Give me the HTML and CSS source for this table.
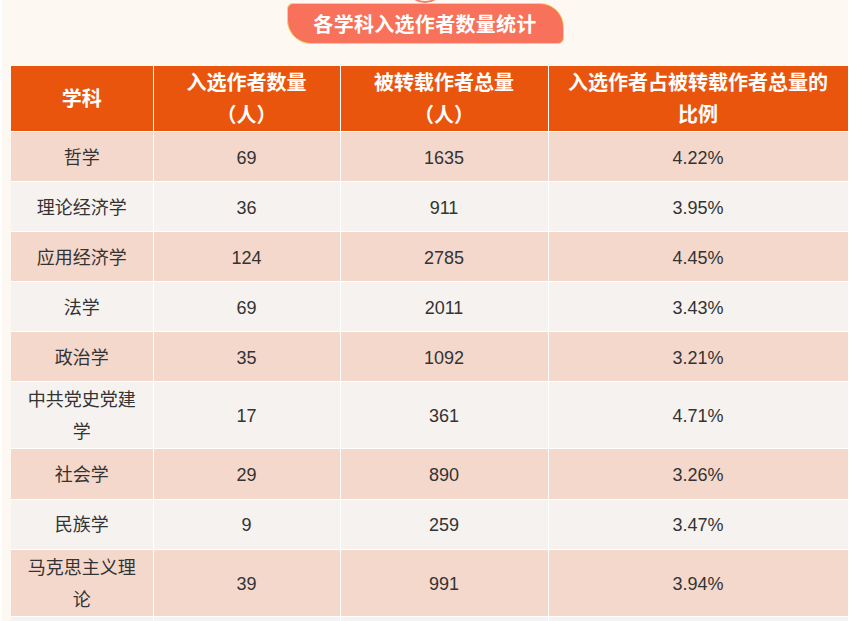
FILE: index.html
```html
<!DOCTYPE html>
<html lang="zh-CN">
<head>
<meta charset="utf-8">
<title>各学科入选作者数量统计</title>
<link rel="stylesheet" href="styles.css">
</head>
<body>
<div class="panel">
  <div class="title-row">
    <span class="ring"></span>
    <h2 class="badge">各学科入选作者数量统计</h2>
  </div>
  <div class="table-wrap">
    <table class="stats">
      <colgroup>
        <col class="c1"><col class="c2"><col class="c3"><col class="c4">
      </colgroup>
      <thead>
        <tr>
          <th>学科</th>
          <th>入选作者数量（人）</th>
          <th>被转载作者总量（人）</th>
          <th>入选作者占被转载作者总量的比例</th>
        </tr>
      </thead>
      <tbody>
        <tr class="odd"><td>哲学</td><td>69</td><td>1635</td><td>4.22%</td></tr>
        <tr class="even"><td>理论经济学</td><td>36</td><td>911</td><td>3.95%</td></tr>
        <tr class="odd"><td>应用经济学</td><td>124</td><td>2785</td><td>4.45%</td></tr>
        <tr class="even"><td>法学</td><td>69</td><td>2011</td><td>3.43%</td></tr>
        <tr class="odd"><td>政治学</td><td>35</td><td>1092</td><td>3.21%</td></tr>
        <tr class="even"><td>中共党史党建学</td><td>17</td><td>361</td><td>4.71%</td></tr>
        <tr class="odd"><td>社会学</td><td>29</td><td>890</td><td>3.26%</td></tr>
        <tr class="even"><td>民族学</td><td>9</td><td>259</td><td>3.47%</td></tr>
        <tr class="odd"><td>马克思主义理论</td><td>39</td><td>991</td><td>3.94%</td></tr>
        <tr class="even"><td>&nbsp;</td><td>&nbsp;</td><td>&nbsp;</td><td>&nbsp;</td></tr>
      </tbody>
    </table>
  </div>
</div>
</body>
</html>
```

FILE: styles.css
```css
html, body {
  margin: 0;
  padding: 0;
  background: #ffffff;
  font-family: "Liberation Sans", "Noto Sans CJK SC", sans-serif;
  overflow: hidden;
}

.panel {
  margin-left: 2px;
  width: 846px;
  background: #fdf8f1;
  min-height: 640px;
}

.title-row {
  position: relative;
  display: flex;
  justify-content: center;
  padding-top: 3px;
}

.ring {
  position: absolute;
  top: -37px;
  left: 50%;
  margin-left: -20px;
  width: 40px;
  height: 40px;
  box-sizing: border-box;
  border: 2px solid #f08468;
  border-radius: 50%;
}

.badge {
  margin: 0;
  box-sizing: border-box;
  height: 41px;
  width: 277px;
  display: flex;
  align-items: center;
  justify-content: center;
  background: #f8715a;
  border: 1px solid #f3d36d;
  border-radius: 6px 24px 6px 24px;
  color: #ffffff;
  font-size: 20px;
  font-weight: bold;
  letter-spacing: 0.3px;
}

.table-wrap {
  margin-top: 22px;
  padding-left: 9px;
}

.stats {
  width: 837px;
  table-layout: fixed;
  border-collapse: collapse;
  color: #333333;
  font-size: 18px;
}

.c1 { width: 142px; }
.c2 { width: 187px; }
.c3 { width: 208px; }
.c4 { width: 300px; }

.stats th,
.stats td {
  border: 1px solid #ffffff;
  text-align: center;
  vertical-align: middle;
  line-height: 32px;
}

.stats thead tr {
  height: 65px;
}

.stats th {
  background: #ea550e;
  color: #ffffff;
  font-size: 20px;
  font-weight: bold;
  padding: 1px 12px 0;
}

.stats thead th:first-child,
.stats tbody td:first-child {
  border-left: none;
}

.stats thead th {
  border-top: none;
}

.stats tbody tr {
  height: 50.1px;
}

.stats td {
  padding: 2px 12px 0;
}

.odd td {
  background: #f5d8cc;
}

.even td {
  background: #f6f2ef;
}
```
